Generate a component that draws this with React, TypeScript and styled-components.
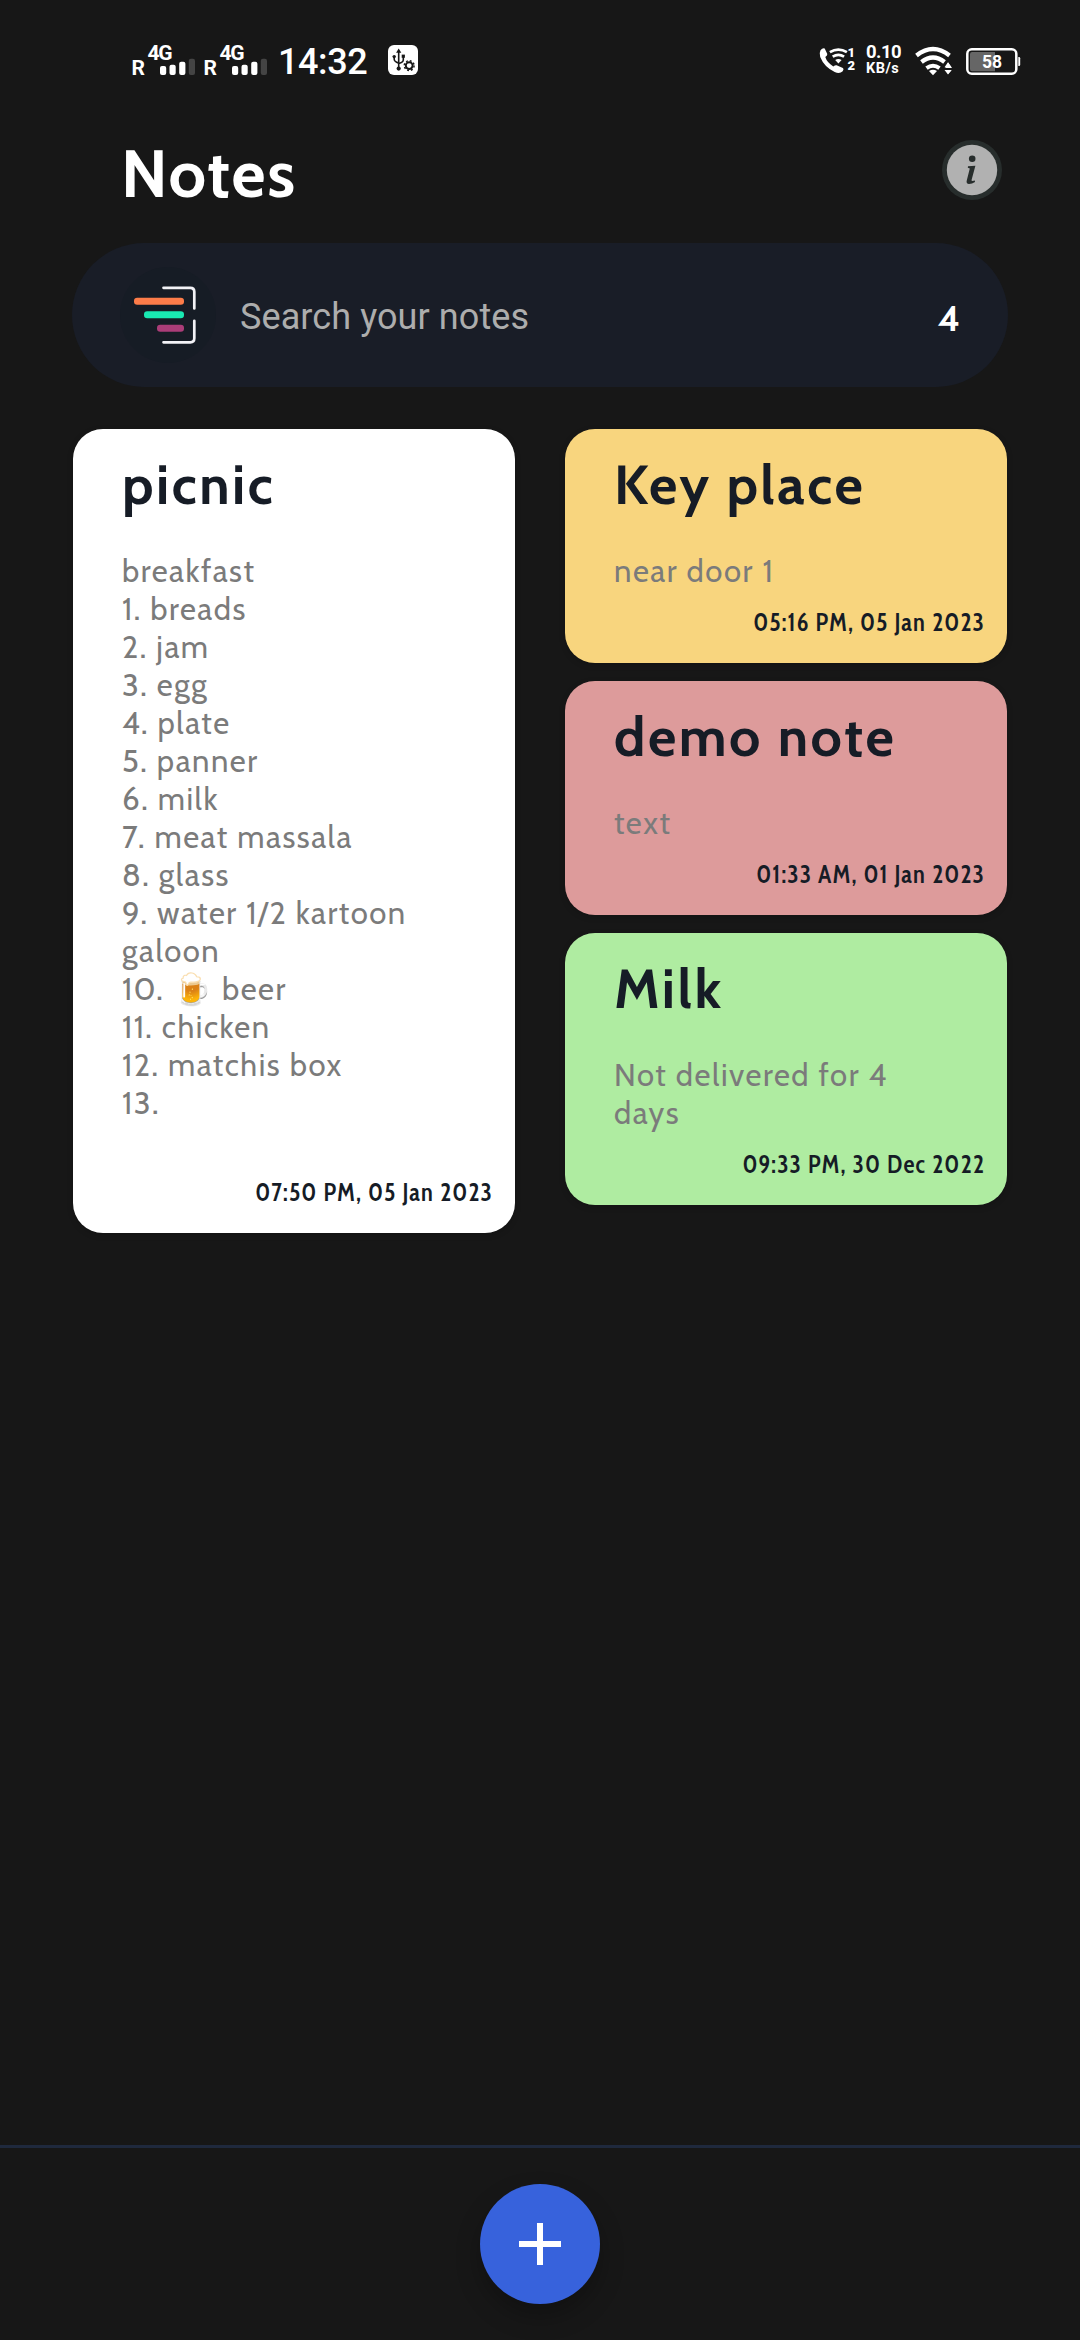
import React from "react";
import styled, { createGlobalStyle } from "styled-components";

const GlobalStyle = createGlobalStyle`
  * { box-sizing: border-box; }
  body { margin: 0; background: #171717; }
`;

const Screen = styled.div`
  width: 1080px;
  height: 2340px;
  display: flex;
  flex-direction: column;
  background: #171717;
  color: #fff;
  font-family: Cabin, Lato, sans-serif;
  overflow: hidden;
`;

const StatusBar = styled.header`
  height: 120px;
  display: flex;
  justify-content: space-between;
  padding: 40px 58px 0 130px;
  font-family: Roboto, sans-serif;
`;

const StatusGroup = styled.div`
  display: flex;
  align-items: flex-start;
`;

const StatusSvg = styled.svg<{ $gap?: number }>`
  display: block;
  flex: none;
  margin-right: ${(p) => p.$gap ?? 0}px;
  font-family: Roboto, sans-serif;
`;

const Clock = styled.time`
  width: 109px;
  padding-top: 1px;
  font-size: 36px;
  font-weight: 500;
  line-height: 42px;
  letter-spacing: -0.4px;
`;

const NetSpeed = styled.div`
  width: 48px;
  padding-top: 3px;
  display: flex;
  flex-direction: column;
`;

const SpeedValue = styled.span`
  font-size: 18.5px;
  font-weight: 700;
  line-height: 19px;
  letter-spacing: -0.5px;
`;

const SpeedUnit = styled.span`
  font-size: 14.5px;
  font-weight: 700;
  line-height: 14px;
  letter-spacing: 0.5px;
`;

const TitleBar = styled.div`
  height: 123px;
  padding: 13px 78px 0 121px;
  display: flex;
  justify-content: space-between;
  align-items: flex-start;
`;

const PageTitle = styled.h1`
  margin: 0;
  font-size: 66px;
  font-weight: 700;
  line-height: 81px;
  letter-spacing: 1.65px;
`;

const InfoButton = styled.button`
  margin: 7px 0 0;
  padding: 0;
  border: 0;
  background: none;
  display: flex;
`;

const SearchBar = styled.div`
  margin: 0 72px;
  height: 144px;
  padding: 0 48px;
  display: flex;
  align-items: center;
  border-radius: 72px;
  background: #191d27;
`;

const Logo = styled.svg`
  flex: none;
  margin-right: 24px;
`;

const Placeholder = styled.span`
  flex: 1;
  padding-top: 4px;
  font: 400 36px/42px Roboto, sans-serif;
  letter-spacing: 0.09px;
  color: #adadad;
`;

const Count = styled.span`
  padding-top: 5px;
  font-size: 36px;
  font-weight: 700;
  line-height: 44px;
`;

const Board = styled.main`
  flex: 1;
  display: flex;
  align-items: flex-start;
  gap: 50px;
  padding: 42px 73px 0;
`;

const Column = styled.div`
  width: 442px;
  display: flex;
  flex-direction: column;
  gap: 18px;
`;

const Card = styled.article<{ $color: string }>`
  padding: 22px 22px 26px 49px;
  display: flex;
  flex-direction: column;
  border-radius: 30px;
  background: ${(p) => p.$color};
  box-shadow: 0 2px 6px rgba(0, 0, 0, 0.18);
`;

const CardTitle = styled.h2`
  margin: 0 0 34px;
  font-size: 55px;
  font-weight: 700;
  line-height: 67px;
  letter-spacing: 2.5px;
  color: #161c26;
`;

const CardBody = styled.p`
  margin: 0 27px 17px 0;
  font-size: 31px;
  line-height: 38px;
  letter-spacing: 1.55px;
  white-space: pre-wrap;
  color: #7b7b7b;
`;

const CardDate = styled.time`
  align-self: flex-end;
  font-family: "Cabin Condensed", Cabin, Lato, sans-serif;
  font-size: 24.75px;
  font-weight: 600;
  line-height: 30px;
  letter-spacing: 1.13px;
  color: #161c26;
`;

const BottomBar = styled.footer`
  height: 195px;
  padding-top: 36px;
  display: flex;
  justify-content: center;
  align-items: flex-start;
  border-top: 3px solid #1f293d;
`;

const AddButton = styled.button`
  width: 120px;
  height: 120px;
  padding: 0;
  border: 0;
  border-radius: 50%;
  display: flex;
  align-items: center;
  justify-content: center;
  background: #3762dc;
  box-shadow: 0 12px 24px rgba(0, 0, 0, 0.26);
`;

interface Note {
  title: string;
  body: string;
  date: string;
  color: string;
}

const picnicLines = [
  "breakfast",
  "1. breads",
  "2. jam",
  "3. egg",
  "4. plate",
  "5. panner",
  "6. milk",
  "7. meat massala",
  "8. glass",
  "9. water 1/2 kartoon galoon",
  "10. 🍺 beer",
  "11. chicken",
  "12. matchis box",
  "13.",
  " ",
];

const columns: Note[][] = [
  [{ title: "picnic", body: picnicLines.join("\n"), date: "07:50 PM, 05 Jan 2023", color: "#ffffff" }],
  [
    { title: "Key place", body: "near door 1", date: "05:16 PM, 05 Jan 2023", color: "#f8d57e" },
    { title: "demo note", body: "text", date: "01:33 AM, 01 Jan 2023", color: "#dd9b9b" },
    { title: "Milk", body: "Not delivered for 4 days", date: "09:33 PM, 30 Dec 2022", color: "#afeca1" },
  ],
];

const Signal = ({ gap }: { gap: number }) => (
  <StatusSvg width="68" height="40" viewBox="130 40 68 40" $gap={gap} fill="#fff">
    <text x="131.400" y="75" fontSize="21" fontWeight="700">R</text>
    <text x="147.500" y="60.300" fontSize="21" fontWeight="700" textLength="25">4G</text>
    <rect x="160" y="66" width="6.200" height="9" rx="2" />
    <rect x="169.500" y="64.700" width="6.200" height="10.300" rx="2" />
    <rect x="179.200" y="61.700" width="6.200" height="13.300" rx="2" />
    <rect x="188.800" y="58.700" width="6.200" height="16.300" rx="2" fill="#444" />
  </StatusSvg>
);

const UsbIcon = () => (
  <StatusSvg width="32" height="40" viewBox="387 40 32 40">
    <rect x="388" y="45" width="30" height="30" rx="6" fill="#fff" />
    <g stroke="#171717" strokeWidth="1.600" fill="none">
      <path d="M398.700 51v17M394.200 56.500v2.800q0 2 2 2.800l2.500 1.200M403.300 56v4q0 1.600-1.800 2.400l-2.800 1.400" />
      <circle cx="409.200" cy="65.600" r="3.400" strokeWidth="1.900" />
      <circle cx="409.200" cy="65.600" r="4.900" strokeWidth="1.500" strokeDasharray="1.900 1.948" />
    </g>
    <g fill="#171717">
      <path d="M398.700 48.500l2.600 4.300h-5.200z" />
      <circle cx="398.700" cy="68.600" r="2.100" />
      <circle cx="394.200" cy="56.600" r="1.700" />
      <path d="M401.700 54.600h3.200v3.200h-3.200z" />
    </g>
  </StatusSvg>
);

const CallIcon = () => (
  <StatusSvg width="38" height="40" viewBox="818 40 38 40" $gap={10} fill="#fff">
    <path d="M820.500 50.200q2-2.400 4.200-1.700l2.600 5.400q.3 1.200-2 3.200q1.700 5.600 8 9.300q2-1.500 3.300-1.100l6.300 2.800q1.400 1-.2 3.200q-3 2.900-8 .8q-10.500-5-14.500-15q-1.200-4.300.3-6.900z" />
    <g fill="none" stroke="#fff" strokeWidth="2.700">
      <path d="M829.900 52.200q8.500-5.300 17 0M832.700 56.600q5.700-3.600 11.400 0" />
    </g>
    <path d="M835.200 59.900q3.200-1.600 6.400 0l-3.200 3.700z" />
    <text x="847.600" y="57.200" fontSize="13" fontWeight="900">1</text>
    <text x="847.600" y="69.600" fontSize="13" fontWeight="900">2</text>
  </StatusSvg>
);

const WifiIcon = () => (
  <StatusSvg width="38" height="40" viewBox="914 40 38 40" $gap={13} fill="#fff">
    <g fill="none" stroke="#fff" strokeWidth="4.300">
      <path d="M916.500 55.500q16.500-13 33 0" />
      <path d="M921.500 62q11.500-9 23 0" />
      <path d="M926.500 68.200q6.500-4.800 13 0" strokeWidth="4" />
    </g>
    <path d="M929 71q4-2.500 8 0l-4 4.300z" />
    <path d="M948 61l5.500 7.800h-9.500zM948 75l5.500-5.500h-9.500z" stroke="#171717" strokeWidth="1.500" />
    <path d="M948 62.300l3.500 5h-7zM948 74.600l3.500-4.600h-7z" />
  </StatusSvg>
);

const BatteryIcon = () => (
  <StatusSvg width="57" height="40" viewBox="965 40 57 40">
    <rect x="967.300" y="49.300" width="49" height="24.400" rx="4.500" fill="none" stroke="#fff" strokeWidth="2.500" />
    <path d="M972 52h23v19.300h-23q-2 0-2-2v-15.300q0-2 2-2z" fill="#666" />
    <path d="M1018.300 57h.7q1.200 0 1.200 1.200v6.600q0 1.200-1.200 1.200h-.7z" fill="#fff" />
    <text x="992" y="67.800" fontSize="17.500" fontWeight="700" fill="#fff" textAnchor="middle">58</text>
  </StatusSvg>
);

const InfoIcon = () => (
  <svg width="60" height="60" viewBox="0 0 60 60">
    <circle cx="30" cy="30" r="30" fill="#272d2c" />
    <circle cx="30" cy="30" r="25.200" fill="#b1b1b1" />
    <g fill="#272d2c">
      <circle cx="30.200" cy="18.800" r="3.300" />
      <path d="M26 26.300l7.400-.6l-3.900 14.600q.1 1.300 3.300.3l.2 1.400q-3 2.100-6 2.100q-3-.4-2.300-3.300l3.100-12.300l-2-.8z" />
    </g>
  </svg>
);

const NoteCard = ({ note }: { note: Note }) => (
  <Card $color={note.color}>
    <CardTitle>{note.title}</CardTitle>
    <CardBody>{note.body}</CardBody>
    <CardDate>{note.date}</CardDate>
  </Card>
);

export default function App() {
  return (
    <Screen>
      <GlobalStyle />
      <StatusBar>
        <StatusGroup>
          <Signal gap={4} />
          <Signal gap={8} />
          <Clock>14:32</Clock>
          <UsbIcon />
        </StatusGroup>
        <StatusGroup>
          <CallIcon />
          <NetSpeed>
            <SpeedValue>0.10</SpeedValue>
            <SpeedUnit>KB/s</SpeedUnit>
          </NetSpeed>
          <WifiIcon />
          <BatteryIcon />
        </StatusGroup>
      </StatusBar>
      <TitleBar>
        <PageTitle>Notes</PageTitle>
        <InfoButton aria-label="Info">
          <InfoIcon />
        </InfoButton>
      </TitleBar>
      <SearchBar>
        <Logo width="96" height="96" viewBox="120 267 96 96">
          <circle cx="168" cy="315" r="48" fill="#161c25" />
          <rect x="134" y="297.800" width="50" height="7" rx="3.200" fill="#fd7c49" />
          <rect x="144" y="311.200" width="40" height="7" rx="3.200" fill="#19e9b2" />
          <rect x="157" y="324.700" width="27" height="7" rx="3.200" fill="#ab3d78" />
          <path
            d="M163.500 287.800h26.800q4 0 4 4v16.700M163.500 342.300h26.800q4 0 4-4v-17.500"
            fill="none"
            stroke="#f2f2f6"
            strokeWidth="2.700"
            strokeLinecap="round"
          />
        </Logo>
        <Placeholder>Search your notes</Placeholder>
        <Count>4</Count>
      </SearchBar>
      <Board>
        {columns.map((notes, i) => (
          <Column key={i}>
            {notes.map((note) => (
              <NoteCard key={note.title} note={note} />
            ))}
          </Column>
        ))}
      </Board>
      <BottomBar>
        <AddButton aria-label="Add note">
          <svg width="42" height="42" viewBox="0 0 42 42">
            <path d="M21 0v42M0 21h42" stroke="#fff" strokeWidth="6" />
          </svg>
        </AddButton>
      </BottomBar>
    </Screen>
  );
}
